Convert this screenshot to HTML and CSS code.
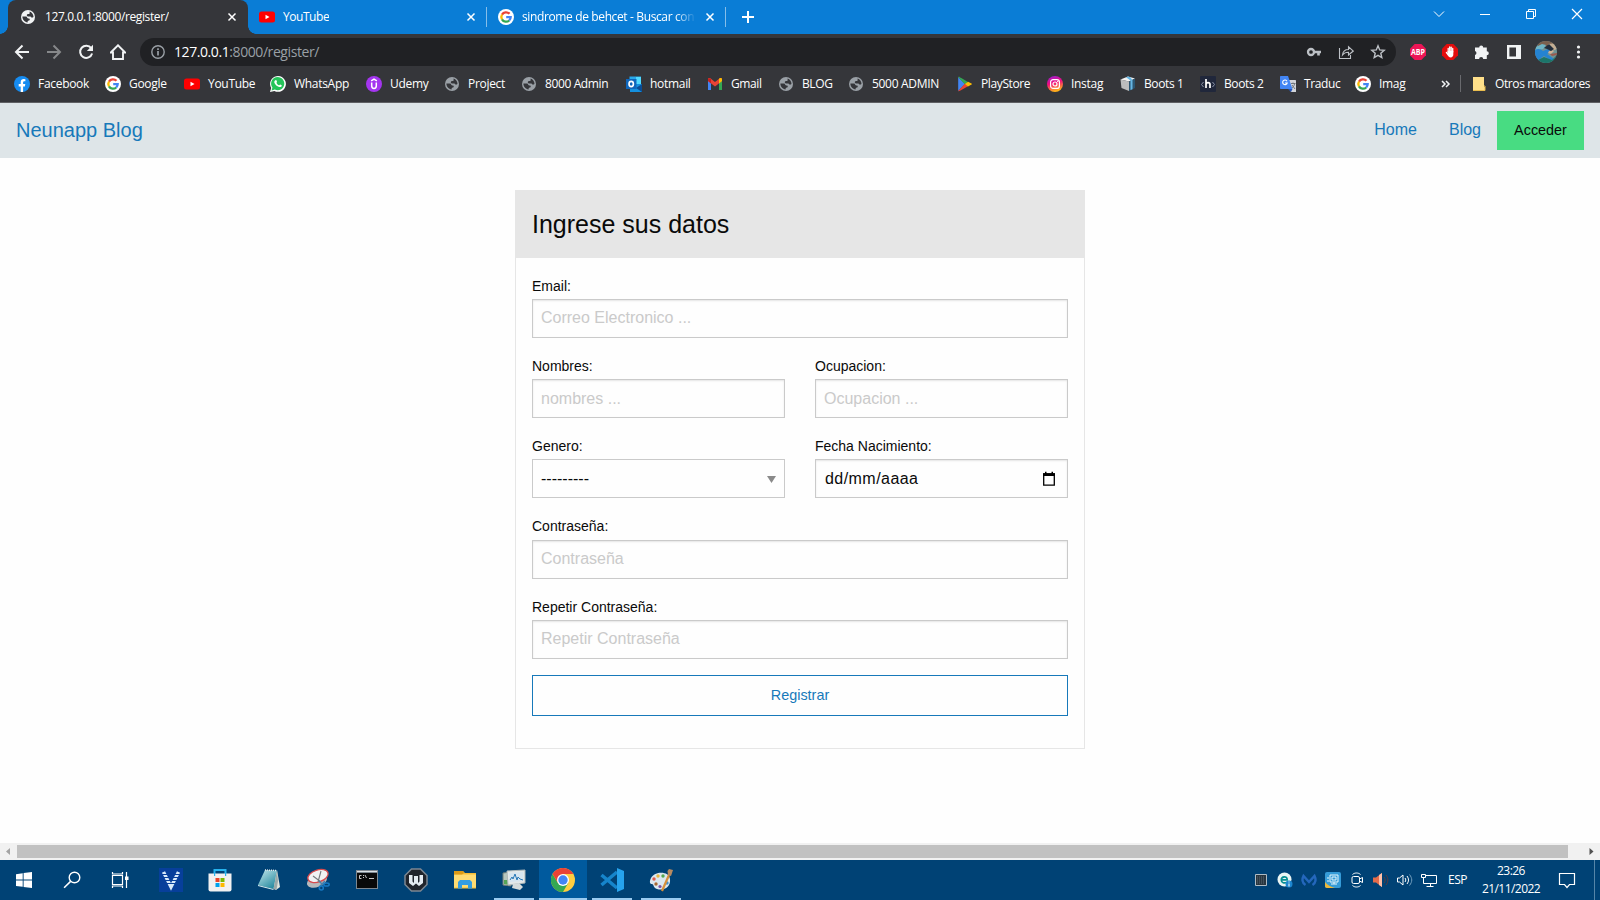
FILE: index.html
```html
<!DOCTYPE html>
<html lang="es">
<head>
<meta charset="utf-8">
<title>Neunapp Blog</title>
<link rel="stylesheet" href="styles.css">
</head>
<body>
<svg class="defs" width="0" height="0">
  <symbol id="globe" viewBox="0 0 14 14"><circle cx="7" cy="7" r="7" fill="currentColor"/><path d="M8.600 1.600C10.800 2.200 12.400 4.300 12.500 6.800c-.5.900-1.300 1-2 .6-.6-.4-.8-1-1.600-1H7c-.8 0-1.300-.6-1.200-1.300C6 4.300 6.700 4.200 7.600 4.100c.8-.1 1-.6 1-1.200zM1.400 6.600h3.400c1 0 1.200.6 1.400 1.200.2.600.8.700 1.500.7.900 0 1.200.6 1 1.300-.2.700-.8.800-1.400.9-.6.100-.7.600-.7 1.700C3.700 12.200 1.400 10 1.400 6.600z" fill="var(--land)"/></symbol>
  <symbol id="google" viewBox="0 0 16 16"><circle cx="8" cy="8" r="8" fill="#fff"/><g fill="none" stroke-width="2.300"><path d="M4 5.600A4.700 4.700 0 0 1 11.500 4.800" stroke="#ea4335"/><path d="M4 5.600a4.700 4.700 0 0 0 0 4.800" stroke="#fbbc05"/><path d="M4 10.400a4.700 4.700 0 0 0 7.200 1.100" stroke="#34a853"/><path d="M11.200 11.500A4.700 4.700 0 0 0 12.700 8.100H8.200" stroke="#4285f4"/></g></symbol>
  <symbol id="youtube" viewBox="0 0 16 16"><rect y="2.500" width="16" height="11" rx="2.500" fill="#f00"/><path d="M6.500 5.700v4.600l4-2.300z" fill="#fff"/></symbol>
  <symbol id="close" viewBox="0 0 10 10"><path d="m1.500 1.500 7 7m0-7-7 7" stroke="#fff" stroke-width="1.500"/></symbol>
</svg>

<header class="tabs">
  <div class="tab tab-active">
    <svg class="fav globe-light"><use href="#globe"/></svg><span class="tab-title t-local">127.0.0.1:8000/register/</span><svg class="close"><use href="#close"/></svg>
  </div>
  <div class="tab tab-yt">
    <svg class="fav16"><use href="#youtube"/></svg><span class="tab-title t-yt">YouTube</span><svg class="close"><use href="#close"/></svg>
  </div>
  <div class="tab tab-google">
    <svg class="fav16"><use href="#google"/></svg><span class="tab-title t-fade">sindrome de behcet - Buscar con</span><svg class="close"><use href="#close"/></svg>
  </div>
  <svg class="plus" viewBox="0 0 12 12"><path d="M6 0v12M0 6h12" stroke="#fff" stroke-width="2"/></svg>
  <div class="window-controls">
    <svg viewBox="0 0 12 12"><path d="m1 3.500 5 5 5-5" fill="none" stroke="#fff"/></svg>
    <svg viewBox="0 0 12 12"><path d="M1 6.500h10" stroke="#fff"/></svg>
    <svg viewBox="0 0 12 12"><path d="M1.500 3.500h7v7h-7zM3.500 3.500v-2h7v7h-2" fill="none" stroke="#fff"/></svg>
    <svg viewBox="0 0 12 12"><path d="m1 1 10 10m0-10L1 11" stroke="#fff" stroke-width="1.200"/></svg>
  </div>
</header>

<div class="toolbar">
  <div class="cells">
    <svg viewBox="0 0 16 16"><path d="M15 8H2m6.500-6.500L2 8l6.500 6.500" fill="none" stroke="#f1f3f4" stroke-width="2"/></svg>
    <svg viewBox="0 0 16 16"><path d="M1 8h13M7.500 1.500 14 8l-6.500 6.500" fill="none" stroke="#86888a" stroke-width="2"/></svg>
    <svg viewBox="0 0 16 16"><path d="M13.200 4.200A6.100 6.100 0 1 0 14.100 9.500" fill="none" stroke="#f1f3f4" stroke-width="2"/><path d="M15 .8V7H8.800z" fill="#f1f3f4"/></svg>
    <svg viewBox="0 0 16 16"><path d="M.800 8.500 8 1.300l7.200 7.200H13V15H3V8.500z" fill="none" stroke="#f1f3f4" stroke-width="1.900"/></svg>
  </div>
  <div class="omnibox">
    <svg class="info" viewBox="0 0 14 14"><circle cx="7" cy="7" r="6.200" fill="none" stroke="#9aa0a6" stroke-width="1.400"/><path d="M7 3.200v1.700M7 6v4.500" stroke="#9aa0a6" stroke-width="1.700"/></svg>
    <span class="url"><b>127.0.0.1</b>:8000/register/</span>
    <div class="cells">
      <svg viewBox="0 0 16 16"><circle cx="5" cy="8" r="3" fill="none" stroke="#bdc1c6" stroke-width="2.300"/><path d="M8 8h7M12.500 8v3.500" stroke="#bdc1c6" stroke-width="2.600"/></svg>
      <svg viewBox="0 0 16 16"><path d="M1.500 4v10.500h11V11M4.500 11c.5-4 3-5.500 6-5.500V2.800L15.300 7l-4.800 4V8.300c-3 0-4.500.7-6 2.700z" fill="none" stroke="#bdc1c6" stroke-width="1.100"/></svg>
      <svg viewBox="0 0 16 16"><path d="m8 1.800 1.700 4.100 4.500.4-3.400 2.900 1 4.400L8 11.300l-3.800 2.300 1-4.400-3.400-2.900 4.500-.4z" fill="none" stroke="#bdc1c6" stroke-width="1.400"/></svg>
    </div>
  </div>
  <div class="cells extensions">
    <svg viewBox="0 0 16 16"><path d="M4.700 0h6.600L16 4.700v6.600L11.300 16H4.700L0 11.300V4.700z" fill="#ed1556"/><text x="8" y="10.800" text-anchor="middle" textLength="14" lengthAdjust="spacingAndGlyphs" class="abp">ABP</text></svg>
    <svg viewBox="0 0 16 16"><path d="M4.700 0h6.600L16 4.700v6.600L11.300 16H4.700L0 11.300V4.700z" fill="#e40d0d"/><path d="M6.200 8V4.300M7.700 7V2.900M9.200 7V3.100M10.700 8V4.500M4.400 8.500l2 2.500" stroke="#fff" stroke-width="1.300" stroke-linecap="round"/><path d="M5.600 7h5.700v3.500c0 1.800-1 2.900-2.600 2.900-1.700 0-2.300-.8-3.100-2.400z" fill="#fff"/></svg>
    <svg viewBox="0 0 16 16"><path d="M1 3.500h4.200a2 2 0 1 1 4 0h3.600v3.800a2 2 0 1 1 0 4V15H9.200a2 2 0 0 0-4.100 0H1v-4a2.100 2.100 0 0 0 0-4z" fill="#f1f3f4"/></svg>
    <svg viewBox="0 0 16 16"><path d="M2.200 2.200h11.600v11.600H2.200z" fill="none" stroke="#f1f3f4" stroke-width="2.400"/><path d="M10 2h4v12h-4z" fill="#f1f3f4"/></svg>
    <svg class="avatar" viewBox="0 0 22 22"><clipPath id="round"><circle cx="11" cy="11" r="11"/></clipPath><g clip-path="url(#round)"><path fill="#6f9295" d="M0 0h22v22H0z"/><path fill="#7b604e" d="M3 0h16v5H3z"/><path d="m1 6 6-3 4 1-3 4-8 2z" fill="#6fb5c6"/><path d="m13 3 9-1v6l-5 2-4-3z" fill="#c3ad92"/><path d="M0 9c3-2 6-1 8 1l5-2 3 3-4 2 7 5-2 2-8-5-3 2-3 5-3-3z" fill="#2583d2"/><path d="m9 7 5-4 5 5-3 2-4-2z" fill="#222e3c"/><path d="m14 10 5 0-3 3-3-1z" fill="#d2b195"/><path d="m3 19 6-3 8 3 5-5v8H3z" fill="#1c756a"/><path d="m15 13 7-1v2l-5 1z" fill="#9b594d"/></g></svg>
    <svg viewBox="0 0 16 16" fill="#f1f3f4"><circle cx="8.500" cy="3" r="1.600"/><circle cx="8.500" cy="8" r="1.600"/><circle cx="8.500" cy="13" r="1.600"/></svg>
  </div>
</div>

<nav class="bookmarks">
  <a><svg viewBox="0 0 16 16"><circle cx="8" cy="8" r="8" fill="#168cf1"/><path d="M6.700 16v-5.600h-2V8h2V6.300c0-2.200 1.200-3.300 3.100-3.300l1.600.2v2h-1c-1 0-1.300.6-1.300 1.300V8h2.200l-.4 2.400H9.100V16z" fill="#fff"/></svg><span>Facebook</span></a>
  <a><svg><use href="#google"/></svg><span>Google</span></a>
  <a><svg><use href="#youtube"/></svg><span>YouTube</span></a>
  <a><svg viewBox="0 0 16 16"><path d="M0 16 1.200 12A7.900 7.900 0 1 1 4.400 15z" fill="#fff"/><path d="m1.600 14.400.8-2.800A6.600 6.600 0 1 1 4.800 13.600z" fill="#25c45a"/><path d="M5.500 4.200c.7-.4 1 .2 1.500 1.500.1.500-.7.800-.5 1.200.7 1.200 1.400 1.800 2.500 2.300.4.100.8-1 1.200-.8l1.500.8c.2 1.500-1 2-2.300 1.900C7 10.800 4 7.500 4.300 5.800c.1-.8.600-1.400 1.200-1.600z" fill="#fff"/></svg><span>WhatsApp</span></a>
  <a><svg viewBox="0 0 16 16"><circle cx="8" cy="8" r="8" fill="#a435f0"/><path d="M5.700 6.500v3.200c0 3.600 4.600 3.600 4.600 0V6.500M5.200 4.800 8 3.200l2.800 1.600" fill="none" stroke="#fff" stroke-width="1.500"/></svg><span>Udemy</span></a>
  <a><svg class="gray"><use href="#globe"/></svg><span>Project</span></a>
  <a class="tight"><svg class="gray"><use href="#globe"/></svg><span>8000 Admin</span></a>
  <a><svg viewBox="0 0 16 16"><path d="M3.500.5H15v8H3.500z" fill="#28a8ea"/><path d="M10 1h5v7h-5z" fill="#50d9ff"/><path d="M4 8h12v8H4z" fill="#1490df"/><path d="m10 12 6-4v8z" fill="#0a4c94"/><path d="M0 3h10.500v10H0z" fill="#0f66bb"/><ellipse cx="5.200" cy="8" rx="2.200" ry="2.600" fill="none" stroke="#fff" stroke-width="1.600"/></svg><span>hotmail</span></a>
  <a class="tight"><svg viewBox="0 0 16 16"><path d="M1 4.500h3V14H1z" fill="#4285f4"/><path d="M12 4.500h3V14h-3z" fill="#34a853"/><path d="M1 5V3.500C1 2 2.500 1.700 3.600 2.500L8 6l4.400-3.500C13.500 1.700 15 2 15 3.500V5L8 10.500z" fill="#ea4335"/><path d="m12 3 .4-.5C13.500 1.700 15 2 15 3.500V5l-3 2.400z" fill="#fbbc04"/><path d="M4 2.800V7.400L1 5V3.500C1 2 2.500 1.700 4 2.800z" fill="#c5221f"/></svg><span>Gmail</span></a>
  <a class="tight"><svg class="gray"><use href="#globe"/></svg><span>BLOG</span></a>
  <a><svg class="gray"><use href="#globe"/></svg><span>5000 ADMIN</span></a>
  <a class="tight"><svg viewBox="0 0 16 16"><path d="M1.200 1v14L8 8z" fill="#4285f4"/><path d="M1.200 1C1.700.7 2.200.8 3 1.200L11 6 8 8.500z" fill="#34a853"/><path d="M1.200 15c.5.400 1 .2 1.800-.2L11 10.200 8 7.500z" fill="#ea4335"/><path d="M11 5.700 14.500 7.500c.5.300.5.800 0 1.100L11 10.400 8 8z" fill="#fbbc04"/></svg><span>PlayStore</span></a>
  <a><svg viewBox="0 0 16 16"><linearGradient id="insta" x1="0" x2=".3" y1="0" y2="1"><stop stop-color="#8b22db"/><stop offset=".5" stop-color="#f20b80"/><stop offset="1" stop-color="#ffb01a"/></linearGradient><circle cx="8" cy="8" r="8" fill="url(#insta)"/><rect x="3.600" y="3.600" width="8.800" height="8.800" rx="2.500" fill="none" stroke="#fff" stroke-width="1.200"/><circle cx="8" cy="8" r="2" fill="none" stroke="#fff" stroke-width="1.200"/><circle cx="10.700" cy="5.400" r=".7" fill="#fff"/></svg><span>Instag</span></a>
  <a class="tight"><svg viewBox="0 0 16 16"><path d="m.5 3.500 7.500-3 7 2-6 3z" fill="#f3f3f3"/><path d="m.5 3.500 8.500 2V15L1.500 12z" fill="#bdbdbd"/><path d="m9 5.500 6-3V12l-6 3z" fill="#2c5672"/><path d="m8 .5 2.500.7 2 3v9L10.500 14V4.500L6 1.300z" fill="#66b6e4"/></svg><span>Boots 1</span></a>
  <a class="tight"><svg viewBox="0 0 16 16"><rect width="16" height="16" rx="1" fill="#20273b"/><path d="m3.500 6-2 2.500 2 2.500m9-5 2 2.500-2 2.500" fill="none" stroke="#8a93a8"/><path d="M6 3v9M6 8.500c0-2.500 4-2.500 4 0V12" fill="none" stroke="#fff" stroke-width="1.700"/></svg><span>Boots 2</span></a>
  <a class="tight"><svg viewBox="0 0 16 16"><path d="M6 4h9c.7 0 1 .3 1 1v11h-5z" fill="#d2d5da"/><path d="M1 0h7l4.500 13H1c-.7 0-1-.3-1-1V1c0-.7.300-1 1-1z" fill="#4285f4"/><path d="M8 13h4.500L11 16z" fill="#2453b5"/><path d="M7 5.200A2.300 2.300 0 1 0 7.200 7H5" fill="none" stroke="#fff" stroke-width="1.100"/><path d="M11 7.500h4.500M13 6.500v1M14.500 8c-.4 2-1.400 3.200-2.500 4M12 9l3 4" fill="none" stroke="#71777e"/></svg><span>Traduc</span></a>
  <a><svg><use href="#google"/></svg><span>Imag</span></a>
  <svg class="more" viewBox="0 0 10 8"><path d="m1 1 3 3-3 3m4-6 3 3-3 3" fill="none" stroke="#f1f3f4" stroke-width="1.500"/></svg>
  <a class="others"><svg viewBox="0 0 16 16"><path d="M2 1h11v10h1v4H2z" fill="#ffe08a"/><path d="M13 10h1v4.500H2" fill="none" stroke="#e9bd4e"/></svg><span>Otros marcadores</span></a>
</nav>

<main class="page">
  <div class="site-nav">
    <a class="brand">Neunapp Blog</a>
    <div class="site-links"><a>Home</a><a>Blog</a><button class="login">Acceder</button></div>
  </div>
  <form class="card">
    <h1 class="card-head">Ingrese sus datos</h1>
    <div class="fields">
      <label class="wide"><span>Email:</span><input placeholder="Correo Electronico ..."></label>
      <label class="low"><span>Nombres:</span><input placeholder="nombres ..."></label>
      <label class="low"><span>Ocupacion:</span><input placeholder="Ocupacion ..."></label>
      <label><span>Genero:</span><div class="control select">---------<svg viewBox="0 0 9 7"><path d="M0 0h9L4.500 7z" fill="#8a8a8a"/></svg></div></label>
      <label><span>Fecha Nacimiento:</span><div class="control date"><span>dd/mm/aaaa</span><svg viewBox="0 0 14 16"><path d="M1.700 3h10.600v11.200H1.700z" fill="none" stroke="#000" stroke-width="1.300"/><path d="M1 2.200h12V5H1zM3 .8h1.500v2H3zm6.500 0H11v2H9.500z"/></svg></div></label>
      <label class="wide low tall"><span>Contraseña:</span><input placeholder="Contraseña"></label>
      <label class="wide"><span>Repetir Contraseña:</span><input placeholder="Repetir Contraseña"></label>
      <button class="submit wide" type="button">Registrar</button>
    </div>
  </form>
</main>

<div class="scrollbar">
  <svg viewBox="0 0 17 17"><path d="M10 5v7L6 8.500z" fill="#a3a3a3"/></svg>
  <div class="thumb"></div>
  <svg class="end" viewBox="0 0 17 17"><path d="M6.500 5v7l4-3.500z" fill="#505050"/></svg>
</div>

<footer class="taskbar">
  <div class="system">
    <svg viewBox="0 0 24 24"><path d="m4 6.200 6.700-1v6.300H4zM11.600 5.100 20 4v7.500h-8.400zM4 12.500h6.700v6.300L4 17.900zm7.600 0H20V20l-8.400-1.100z" fill="#fff"/></svg>
    <svg viewBox="0 0 24 24"><circle cx="14.500" cy="9.500" r="5.300" fill="none" stroke="#fff" stroke-width="1.400"/><path d="m10.600 13.400-6.500 6.300" stroke="#fff" stroke-width="1.500"/></svg>
    <svg viewBox="0 0 24 24"><path d="M4.500 7.500h10v9h-10zM4.500 4v2h10V4M4.500 20v-2h10v2M18.500 4v16" fill="none" stroke="#fff" stroke-width="1.200"/><path d="M17 8.500h3.500V12H17z" fill="#fff"/></svg>
  </div>
  <div class="apps">
    <div><svg viewBox="0 0 24 24"><path fill="#073f9b" d="M0 0h24v24H0z"/><path d="m4.500 4 7.500 15 7.500-15" fill="none" stroke="#d8eafa" stroke-width="3.400"/><path d="M2 6.500h20M2 9.500h20M2 12.500h20M2 15.500h20" stroke="#073f9b" stroke-width="1"/></svg></div>
    <div><svg viewBox="0 0 24 24"><path d="M6.500 6V2h11v4" fill="none" stroke="#26b3ee" stroke-width="2"/><path d="M.500 5.500h23v16a2 2 0 0 1-2 2h-19a2 2 0 0 1-2-2z" fill="#f2f1f1"/><path d="M6 5h1.200v3H6zm11 0h1.200v3H17z" fill="#26b3ee"/><path d="M7.500 10h4v4h-4z" fill="#e8442a"/><path d="M12.500 10h4v4h-4z" fill="#7cb901"/><path d="M7.500 15h4v4h-4z" fill="#00a2ed"/><path d="M12.500 15h4v4h-4z" fill="#fdb900"/></svg></div>
    <div><svg viewBox="0 0 24 24"><linearGradient id="note" x2=".7" y2="1"><stop stop-color="#c5e9ed"/><stop offset="1" stop-color="#278aa0"/></linearGradient><path d="m20 2 3 17-4 3-5-3z" fill="#dfe5de"/><path d="m8 2 12 .5L16.500 21 1 17z" fill="url(#note)"/><path d="m1 17 15.500 4v1L1 18z" fill="#d8eef0"/><path d="m20 3-3.500 18 3 1 1.500-9z" fill="#9aa9a9"/><path d="m8 2 12 .5" stroke="#e6ebe9" stroke-width="1.500" stroke-dasharray="1 1"/></svg></div>
    <div><svg viewBox="0 0 24 24"><ellipse cx="11" cy="13" rx="10.500" ry="6" transform="rotate(-22 11 13)" fill="#b7b9bc"/><ellipse cx="12" cy="8" rx="10.500" ry="6" transform="rotate(-18 12 8)" fill="#f2f2f4" stroke="#d84b4e" stroke-width="1.300"/><path d="m7 8 8 6m0-11-3 11" stroke="#77797d" stroke-width="1.100"/><path d="m13 13 4 4m2-4-5 5" stroke="#4c7fa7" stroke-width="1.500"/><circle cx="15.300" cy="20" r="2" fill="none" stroke="#1579c4" stroke-width="1.600"/><ellipse cx="20.500" cy="16.500" rx="2.700" ry="1.600" fill="none" stroke="#1579c4" stroke-width="1.500"/></svg></div>
    <div><svg viewBox="0 0 24 24"><path fill="#7e8790" d="M1 2h22v19H1z"/><path fill="#090909" d="M2 5h20v15H2z"/><path fill="#dce2e5" d="M2 3h20v1H2z"/><path d="M6.500 7.500H4.500v3h2M8.500 7v1m0 1v1m1.500-3 1.500 3M14 10.500h5" fill="none" stroke="#ddd" stroke-width=".9"/></svg></div>
    <div><svg viewBox="0 0 24 24"><path d="M7.500 1h9L23 7.500v9L16.500 23h-9L1 16.500v-9z" fill="#20242c" stroke="#7c8793" stroke-width="1.500"/><path d="M5 7h3.500v6.500l1.500 1.500V8h4v7l1.500-1.500V7H19v8l-4 3-3-2.500L9 18l-4-3z" fill="#e4ebf2"/></svg></div>
    <div><svg viewBox="0 0 24 24"><path d="M1 3h9l2 2h11v15.500H1z" fill="#f6bd37"/><path d="M1 6.500h22v13H1z" fill="#ffdc73"/><path d="M1 3h9l1 2-2 1.500H1z" fill="#dc9a17"/><path d="M5 20.500V14l2-2h10l2 2v6.500h-4V17H9v3.500z" fill="#349de3"/></svg></div>
    <div class="open"><svg viewBox="0 0 24 24"><path d="m1 5 8-1v14l-8-1z" fill="#b7c6bd" stroke="#707e7b"/><path d="m2 12 5 0v5l-5-1z" fill="#55a456"/><path d="m5 3 18-1v13L6 17z" fill="#e4e9e9" stroke="#aeb8b9"/><path d="m7 5 14-1v9L8 14z" fill="#d7e6f0"/><path d="m8 12 2-3 1 2 2-5 2 6 1-3 2 2 3 1" fill="none" stroke="#2778b7"/><path d="m11 16 6-1 4 4-3 3-8-2z" fill="#d6dcdc"/></svg></div>
    <div class="open active"><svg viewBox="0 0 24 24"><circle cx="12" cy="12" r="12" fill="#ffcd40"/><path d="M1.600 6A12 12 0 0 0 12 24l5.200-9H7z" fill="#34a853"/><path d="M1.600 6A12 12 0 0 1 22.400 6H12L7 15z" fill="#ea4335"/><circle cx="12" cy="12" r="6" fill="#fff"/><circle cx="12" cy="12" r="4.700" fill="#4285f4"/></svg></div>
    <div class="open"><svg viewBox="0 0 24 24"><path d="m1.500 7 15.500 13M1.500 17 17 4" stroke="#1685cb" stroke-width="3.500"/><path d="m17 0 7 3v18l-7 3z" fill="#26a3ed"/></svg></div>
    <div class="open"><svg viewBox="0 0 24 24"><path d="M2 10C6 3 20 3 21 11c1 8-6 12-13 10-4-1-3-5-5-5s-3-2-1-6z" fill="#dce8ef"/><circle cx="5" cy="11" r="1.700" fill="#e05c49"/><circle cx="9" cy="8" r="1.700" fill="#e6b741"/><circle cx="14" cy="8" r="1.700" fill="#54a951"/><circle cx="7" cy="16" r="1.700" fill="#a76a34"/><circle cx="11" cy="18.500" r="1.600" fill="#7b51a4"/><circle cx="18" cy="15" r="1.700" fill="#3f91cf"/><path d="m20 7-7 16" stroke="#d6903b" stroke-width="2.200"/><path d="m18.500 3 1.500-2 4 1-2 6-3-1z" fill="#b88a60"/></svg></div>
  </div>
  <div class="tray">
    <svg viewBox="0 0 16 16"><path d="M2.500 2.500h11v11h-11z" fill="#293640" stroke="#aebbc4"/><path d="M4 5h8M4 7h8M4 9h8M4 11h8" stroke="#5e6b74" stroke-dasharray="1 1"/></svg>
    <svg viewBox="0 0 16 16"><circle cx="7.500" cy="7.500" r="7" fill="#e9f5f4"/><path d="M4.500 7.800h5.700C10.200 3.500 4.300 4 4.300 8c0 3 3 3.500 5.700 2.300" fill="none" stroke="#078e91" stroke-width="1.700"/><circle cx="12" cy="12" r="3.500" fill="#1c86d0"/><path d="M12 9.500v1m0 1v3" stroke="#fff"/></svg>
    <svg viewBox="0 0 16 16"><path d="M4.500 13C1 11 1 7 2.500 4L8 10l5.500-6c1.500 3 1.500 7-2 9" fill="none" stroke="#2467bc" stroke-width="2.500"/></svg>
    <svg viewBox="0 0 16 16"><rect width="16" height="16" rx="2" fill="#359bd8"/><path d="M5 3h8v7H5zM7 5h4v3H7zM9 10v2m-3 0h6M2 6h2M2 9h2" fill="none" stroke="#e7f6fc"/><path d="M0 10c2 3 6 5 10 6H2c-1 0-2-1-2-2z" fill="#edb83a"/></svg>
    <svg viewBox="0 0 16 16"><rect x="3" y="4.500" width="7.500" height="7" rx="1.500" fill="none" stroke="#fff"/><path d="m10.500 7 3-1.500v5L10.500 9M3.500 2.500c2-2 6-2 8 0m-8 11c2 2 6 2 8 0" fill="none" stroke="#fff"/></svg>
    <svg viewBox="0 0 16 16"><path d="M0 5.500h3L9 1v14l-6-4.500H0z" fill="#e46c4b"/><path d="m6 3 3-2v14l-3-2z" fill="#ffc0a8"/><path d="M11 5c1.500 2 1.500 4 0 6m2-8c2.500 3 2.500 7 0 10" fill="none" stroke="#5c3b3b"/></svg>
    <svg viewBox="0 0 16 16"><path d="M.500 6h2L6 3v10l-3.500-3h-2zM8 6c1 1.500 1 2.500 0 4m2-6c2 3 2 5 0 8" fill="none" stroke="#fff"/><path d="M12.500 2.500c3 4 3 7 0 11" fill="none" stroke="#729dbd"/></svg>
    <svg viewBox="0 0 16 16"><path d="M5 3.500h10.500v8H4M9.500 11.500v3m-4 0h7M.500 2.500h4v3h-4zM2.500 5.500v6H5" fill="none" stroke="#fff"/></svg>
    <span class="language">ESP</span>
    <time class="clock"><span>23:26</span><span>21/11/2022</span></time>
    <svg class="notice" viewBox="0 0 18 18"><path d="M1.500 2.500h15v11h-5l-2.500 3-2.500-3h-5z" fill="none" stroke="#fff" stroke-width="1.200"/></svg>
  </div>
</footer>
</body>
</html>
```

FILE: styles.css
```css
* { box-sizing: border-box; }
body {
  margin: 0;
  width: 1600px;
  height: 900px;
  overflow: hidden;
  display: flex;
  flex-direction: column;
  background: #fefefe;
  font-family: "Open Sans", "Noto Sans", sans-serif;
  font-size: 12px;
  color: #fff;
}
svg { display: block; flex: none; }
.defs { position: absolute; }

/* Browser tabs */
.tabs { height: 34px; flex: none; display: flex; align-items: center; background: #0a7dd6; padding-left: 8px; }
.tab { height: 34px; display: flex; align-items: center; }
.tab-active { width: 240px; padding: 0 11px 0 13px; background: #35363a; border-radius: 8px 8px 0 0; }
.tab-active::before, .tab-active::after { content: ""; position: absolute; top: 26px; width: 8px; height: 8px; }
.tab-active::before { left: 0; background: radial-gradient(circle at 0 0, transparent 7.500px, #35363a 8px); }
.tab-active::after { left: 248px; background: radial-gradient(circle at 100% 0, transparent 7.500px, #35363a 8px); }
.tab-yt { width: 239px; padding: 0 11px; }
.tab-google { width: 239px; padding: 0 11px; }
.tab-yt, .tab-google { background: linear-gradient(#86bee9, #86bee9) right center / 1px 20px no-repeat; }
.fav { width: 14px; height: 14px; margin-right: 10px; }
.globe-light { color: #f1f3f4; --land: #35363a; }
.fav16 { width: 16px; height: 16px; margin-right: 8px; }
.close { width: 10px; height: 10px; margin-left: auto; }
.tab-title { white-space: nowrap; overflow: hidden; line-height: 17px; padding-bottom: 1px; }
.t-local { letter-spacing: -.380px; }
.t-yt { letter-spacing: -.450px; }
.t-fade { width: 174px; letter-spacing: -.370px; -webkit-mask-image: linear-gradient(90deg, #000 88%, transparent); }
.plus { width: 12px; height: 12px; margin-left: 16px; }
.window-controls { margin: 0 17px 6px auto; display: flex; gap: 34px; }
.window-controls svg { width: 12px; height: 12px; }

/* Address bar */
.toolbar { height: 36px; flex: none; display: flex; align-items: center; background: #35363a; padding: 0 6px; }
.cells { display: grid; grid-auto-flow: column; grid-auto-columns: 32px; justify-items: center; align-items: center; }
.cells svg { width: 16px; height: 16px; }
.cells .avatar { width: 22px; height: 22px; }
.omnibox { width: 1256px; height: 28px; margin: 0 6px; padding: 0 2px 0 11px; border-radius: 14px; background: #202124; display: flex; align-items: center; }
.info { width: 14px; height: 14px; margin-right: 9px; }
.url { flex: 1; font-size: 14px; letter-spacing: -.420px; color: #9aa0a6; padding-bottom: 1px; }
.url b { font-weight: 400; color: #fff; }
.abp { font: bold 8px "Open Sans", sans-serif; fill: #fff; }

/* Bookmarks */
.bookmarks {
  height: 33px;
  flex: none;
  display: grid;
  grid-template-columns: 91px 79px 86px 96px 78px 77px 105px 81px 71px 70px 109px 90px 73px 80px 80px 75px 86px 19px auto;
  align-items: center;
  padding: 0 0 5px 14px;
  background: #35363a;
  border-bottom: 1px solid #5f6064;
}
.bookmarks a { display: flex; align-items: center; gap: 8px; white-space: nowrap; letter-spacing: -.300px; }
.bookmarks .tight { letter-spacing: -.380px; }
.bookmarks a svg { width: 16px; height: 16px; }
.bookmarks .gray { padding: 1px; color: #9aa0a6; --land: #35363a; }
.more { width: 10px; height: 8px; }
.bookmarks .others { border-left: 1px solid #696a6e; padding-left: 10px; letter-spacing: -.400px; }

/* Site */
.page { flex: 1; font-family: "Liberation Sans", Arial, sans-serif; color: #0a0a0a; }
.site-nav { height: 55px; background: #dee5e8; padding: 0 16px; display: flex; justify-content: space-between; align-items: center; color: #1779ba; }
.brand { font-size: 20px; line-height: 24px; padding-bottom: 2px; }
.site-links { display: flex; align-items: center; font-size: 16px; }
.site-links a { padding: 0 16px 2px; }
.login { width: 87px; height: 39px; padding-bottom: 3px; border: 0; background: #48dc82; color: #0a0a0a; font: 14.400px "Liberation Sans", Arial, sans-serif; }
.card { width: 570px; margin: 32px auto 0; border: 1px solid #e6e6e6; }
.card-head { margin: 0; height: 67px; padding: 0 16px; background: #e6e6e6; font-size: 25px; font-weight: 400; line-height: 67px; }
.fields { display: grid; grid-template-columns: 253px 253px; column-gap: 30px; row-gap: 16px; padding: 16px 16px 32px; }
.wide { grid-column: 1 / -1; }
.fields label { display: block; font-size: 14px; }
.fields label > span { display: block; line-height: 25px; }
.fields .tall > span { padding-bottom: 1px; }
.fields input, .control {
  display: flex;
  align-items: center;
  width: 100%;
  height: 39px;
  padding: 0 8px;
  border: 1px solid #cacaca;
  border-radius: 0;
  background: #fefefe;
  box-shadow: inset 0 1px 2px rgba(10, 10, 10, .1);
  font: 16px "Liberation Sans", Arial, sans-serif;
}
.fields input { padding-bottom: 2px; }
.fields .low input { padding-bottom: 0; }
.fields .tall input { padding-bottom: 1px; }
.fields input::placeholder { color: #cacaca; opacity: 1; }
.control svg { margin-left: auto; }
.select { box-shadow: none; padding-top: 1px; }
.select svg { width: 9px; height: 7px; }
.date { padding: 0 11px 0 9px; }
.date span { letter-spacing: .450px; }
.date svg { width: 14px; height: 16px; }
.submit { height: 41px; padding-bottom: 2px; border: 1px solid #1779ba; background: transparent; color: #1779ba; font: 14.400px "Liberation Sans", Arial, sans-serif; }

/* Horizontal scrollbar */
.scrollbar { height: 17px; flex: none; display: flex; align-items: center; background: #f1f1f1; }
.scrollbar svg { width: 17px; height: 17px; }
.scrollbar .end { margin-left: auto; }
.thumb { width: 1551px; height: 13px; background: #c1c1c1; }

/* Taskbar */
.taskbar { height: 40px; flex: none; display: flex; background: #004275; }
.system { display: grid; grid-template-columns: repeat(3, 48px); place-items: center; width: 146px; }
.system svg, .apps svg { width: 24px; height: 24px; }
.apps { display: grid; grid-template-columns: repeat(8, 49px) 50px 48px 49px; }
.apps div { display: flex; align-items: center; justify-content: center; }
.open { background: linear-gradient(#9acbf0, #9acbf0) center bottom / 40px 2px no-repeat; }
.open.active { margin: 0 1px; background: linear-gradient(#9acbf0, #9acbf0) bottom / 100% 2px no-repeat #005a9e; }
.tray { margin-left: auto; width: 351px; display: grid; grid-template-columns: repeat(8, 24px) 33px 74px 37px; justify-items: center; align-items: center; border-right: 5px solid #004275; box-shadow: inset -1px 0 #5585a8; }
.tray svg { width: 16px; height: 16px; }
.language { letter-spacing: -.500px; padding-bottom: 1px; }
.clock { display: flex; flex-direction: column; align-items: center; line-height: 18px; letter-spacing: -.550px; white-space: nowrap; }
.tray .notice { width: 18px; height: 18px; }
```
